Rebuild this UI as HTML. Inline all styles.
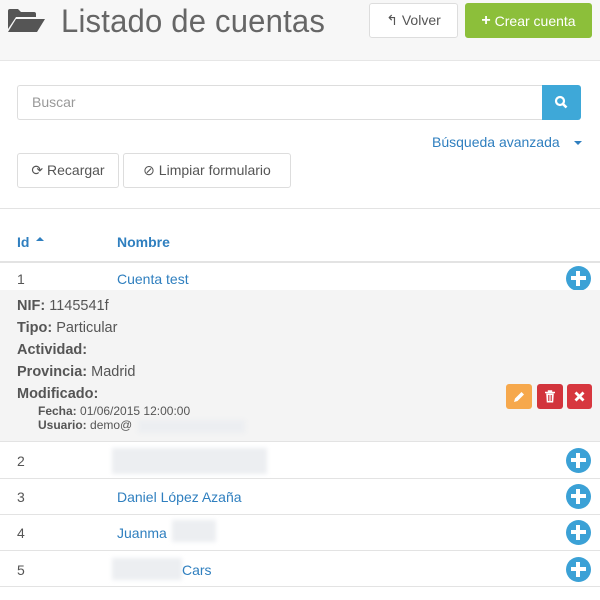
<!DOCTYPE html>
<html><head><meta charset="utf-8"><style>
*{box-sizing:border-box;margin:0;padding:0}
body{width:600px;height:600px;background:#fff;font-family:"Liberation Sans",sans-serif;color:#555;position:relative;overflow:hidden;font-size:14px}
.a{position:absolute}
.hdr{left:0;top:0;width:600px;height:61px;background:#f7f7f7;border-bottom:1px solid #e6e6e6}
.btn{position:absolute;border:1px solid #ddd;border-radius:3px;background:#fff;font-size:14px;color:#555;display:flex;align-items:center;justify-content:center}
.blue{color:#2f7fbf}
.line{position:absolute;left:0;width:600px;height:1px;background:#e3e3e3}
.plus{position:absolute;left:566px;width:25px;height:25px;border-radius:50%;background:#3ba1d6;color:#fff}
.plus:before{content:"";position:absolute;left:5px;top:10px;width:15px;height:4px;background:#fff}
.plus:after{content:"";position:absolute;left:10px;top:5px;width:4px;height:15px;background:#fff}
.blur{position:absolute;background:#eceef1;filter:blur(2px)}
.d{position:absolute;left:17px;font-size:14.5px;color:#555}
.d b{color:#555}
.s{position:absolute;left:38px;font-size:12px;color:#555}
</style></head><body>
<div class="a hdr"></div>
<svg class="a" style="left:8px;top:8px" width="38" height="24" viewBox="0 0 38 24"><path d="M0 3 Q0 1 2 1 H10 L13 4 H26 Q28 4 28 6 V9 H8 L0 21 Z" fill="#555"/><path d="M8 11 H37 L29 24 H0 Z" fill="#555"/></svg>
<div class="a" style="left:61px;top:3px;font-size:32px;color:#666;letter-spacing:0.2px;transform:scaleX(0.97);transform-origin:left">Listado de cuentas</div>
<div class="btn" style="left:369px;top:3px;width:89px;height:35px">↰&nbsp;Volver</div>
<div class="btn" style="left:465px;top:3px;width:127px;height:35px;background:#8cbf3a;border-color:#8cbf3a;color:#fff"><b style="font-size:16px">+</b>&nbsp;Crear cuenta</div>
<div class="a" style="left:17px;top:85px;width:525px;height:35px;border:1px solid #ddd;border-right:none;border-radius:3px 0 0 3px"></div>
<div class="a" style="left:32px;top:94px;color:#999;font-size:14px">Buscar</div>
<div class="a" style="left:542px;top:85px;width:39px;height:35px;background:#3ea8d8;border-radius:0 3px 3px 0"></div>
<svg class="a" style="left:554px;top:95px" width="14" height="14" viewBox="0 0 14 14"><circle cx="6" cy="6" r="4" stroke="#fff" stroke-width="2.2" fill="none"/><path d="M9 9 L12.5 12.5" stroke="#fff" stroke-width="2.6"/></svg>
<div class="a blue" style="left:432px;top:134px;font-size:14px">Búsqueda avanzada</div>
<div class="a" style="left:574px;top:141px;border:4px solid transparent;border-top:4px solid #2f7fbf"></div>
<div class="btn" style="left:17px;top:153px;width:102px;height:35px">⟳&nbsp;Recargar</div>
<div class="btn" style="left:123px;top:153px;width:168px;height:35px">⊘&nbsp;Limpiar formulario</div>
<div class="line" style="top:208px"></div>
<div class="a blue" style="left:17px;top:234px;font-weight:bold;font-size:14px">Id</div>
<div class="a" style="left:36px;top:233px;border:4px solid transparent;border-bottom:4px solid #2f7fbf"></div>
<div class="a blue" style="left:117px;top:234px;font-weight:bold;font-size:14px">Nombre</div>
<div class="line" style="top:261px;height:2px"></div>
<div class="a" style="left:17px;top:271px">1</div>
<div class="a blue" style="left:117px;top:271px">Cuenta test</div>
<div class="plus" style="top:266px"></div>
<div class="a" style="left:0;top:290px;width:600px;height:151px;background:#f4f4f4"></div>
<div class="d" style="top:298px"><b>NIF:</b> 1145541f</div>
<div class="d" style="top:320px"><b>Tipo:</b> Particular</div>
<div class="d" style="top:342px"><b>Actividad:</b></div>
<div class="d" style="top:364px"><b>Provincia:</b> Madrid</div>
<div class="d" style="top:386px"><b>Modificado:</b></div>
<div class="s" style="top:404px"><b>Fecha:</b> 01/06/2015 12:00:00</div>
<div class="s" style="top:418px"><b>Usuario:</b> demo@</div>
<div class="blur" style="left:138px;top:420px;width:107px;height:13px"></div>
<div class="a" style="left:506px;top:384px;width:26px;height:25px;background:#f6a84c;border-radius:3px"></div>
<svg class="a" style="left:512px;top:390px" width="14" height="14" viewBox="0 0 14 14"><path d="M2 12 L3 8.5 L9.5 2 L12 4.5 L5.5 11 Z" fill="#fff"/></svg>
<div class="a" style="left:537px;top:384px;width:26px;height:25px;background:#d2343c;border-radius:3px"></div>
<svg class="a" style="left:544px;top:390px" width="12" height="13" viewBox="0 0 12 13"><path d="M1 2.5 H11 M4.5 2.5 V1 H7.5 V2.5" stroke="#fff" stroke-width="1.4" fill="none"/><path d="M2.2 3.5 H9.8 L9.2 12.5 H2.8 Z" fill="#fff"/><path d="M4.5 5 V11 M6 5 V11 M7.5 5 V11" stroke="#d2343c" stroke-width="0.8"/></svg>
<div class="a" style="left:567px;top:384px;width:25px;height:25px;background:#d7373f;border-radius:3px"></div>
<svg class="a" style="left:574px;top:391px" width="11" height="11" viewBox="0 0 11 11"><path d="M1.5 1.5 L9.5 9.5 M9.5 1.5 L1.5 9.5" stroke="#fff" stroke-width="2.8"/></svg>
<div class="line" style="top:441px"></div>
<div class="a" style="left:17px;top:453px">2</div>
<div class="blur" style="left:112px;top:448px;width:155px;height:26px"></div>
<div class="plus" style="top:448px"></div>
<div class="line" style="top:478px"></div>
<div class="a" style="left:17px;top:489px">3</div>
<div class="a blue" style="left:117px;top:489px">Daniel López Azaña</div>
<div class="plus" style="top:484px"></div>
<div class="line" style="top:514px"></div>
<div class="a" style="left:17px;top:525px">4</div>
<div class="a blue" style="left:117px;top:525px">Juanma</div>
<div class="blur" style="left:172px;top:520px;width:44px;height:22px"></div>
<div class="plus" style="top:520px"></div>
<div class="line" style="top:550px"></div>
<div class="a" style="left:17px;top:562px">5</div>
<div class="blur" style="left:112px;top:558px;width:70px;height:22px"></div>
<div class="a blue" style="left:182px;top:562px">Cars</div>
<div class="plus" style="top:557px"></div>
<div class="line" style="top:586px"></div>
</body></html>
